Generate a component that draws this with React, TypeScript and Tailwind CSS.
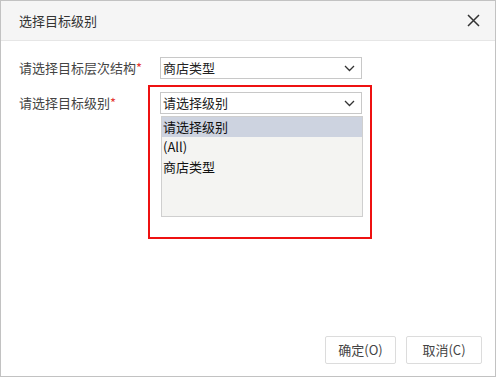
import React from 'react';

const font = { fontFamily: '"Noto Sans CJK SC", "Noto Sans", sans-serif' };

function Chevron() {
  return (
    <svg width="11" height="7" viewBox="0 0 11 7" fill="none">
      <path d="M1 1l4.5 4.5L10 1" stroke="#333" strokeWidth="1.3" />
    </svg>
  );
}

function Select({ value }: { value: string }) {
  return (
    <div className="flex h-[22px] w-[202px] items-center justify-between border border-[#c8c8c8] bg-white pl-[2px] pr-[6px] text-[13px] text-[#222]">
      <span>{value}</span>
      <Chevron />
    </div>
  );
}

export default function App() {
  const options = ['请选择级别', '(All)', '商店类型'];
  return (
    <div className="flex h-[377px] w-[496px] flex-col border border-[#c2c2c2] bg-white" style={font}>
      {/* Header */}
      <div className="flex h-[40px] shrink-0 items-center justify-between border-b border-[#e6e6e6] bg-[#f5f5f5] pl-[18px] pr-[15px]">
        <span className="text-[13px] text-[#333]">选择目标级别</span>
        <svg width="13" height="13" viewBox="0 0 13 13">
          <path d="M1 1l11 11M12 1L1 12" stroke="#333" strokeWidth="1.5" />
        </svg>
      </div>

      {/* Body */}
      <div className="relative flex flex-1 flex-col gap-[13px] pl-[18px] pt-[16px]">
        <div className="flex items-center">
          <span className="w-[141px] text-[13px] text-[#444]">
            请选择目标层次结构<span className="text-[#e53935]">*</span>
          </span>
          <Select value="商店类型" />
        </div>
        <div className="flex items-start">
          <span className="flex h-[22px] w-[141px] items-center text-[13px] text-[#444]">
            请选择目标级别<span className="text-[#e53935]">*</span>
          </span>
          <div className="flex flex-col gap-[2px]">
            <Select value="请选择级别" />
            <div className="ml-[1px] flex h-[101px] w-[202px] flex-col border border-[#cfcfcf] bg-[#f4f4f2] text-[13px] text-[#111]">
              {options.map((o, i) => (
                <div
                  key={o}
                  className={`flex h-[20px] items-center pl-[1px] ${i === 0 ? 'bg-[#cdd3e0]' : ''}`}
                >
                  {o}
                </div>
              ))}
            </div>
          </div>
        </div>
        {/* highlight annotation */}
        <div className="pointer-events-none absolute left-[147px] top-[44px] h-[154px] w-[224px] border-2 border-[#ee1111]" />
      </div>

      {/* Footer */}
      <div className="flex justify-end gap-[10px] pb-[12px] pr-[13px]">
        <button className="h-[28px] w-[71px] rounded-[2px] border border-[#dcdcdc] bg-white text-[13px] text-[#444]">
          确定(O)
        </button>
        <button className="h-[28px] w-[76px] rounded-[2px] border border-[#dcdcdc] bg-white text-[13px] text-[#444]">
          取消(C)
        </button>
      </div>
    </div>
  );
}
